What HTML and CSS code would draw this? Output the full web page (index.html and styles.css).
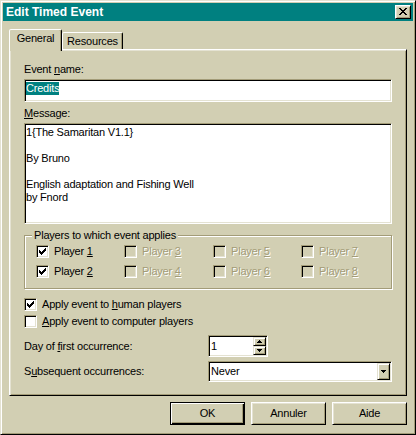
FILE: index.html
```html
<!DOCTYPE html>
<html>
<head>
<meta charset="utf-8">
<title>Edit Timed Event</title>
<link rel="stylesheet" href="styles.css">
</head>
<body>
<div class="window">
  <div class="titlebar">
    <span class="title">Edit Timed Event</span>
    <div class="close raised">
      <svg class="px" width="8" height="7" viewBox="0 0 8 7"><path d="M0 0h2v1H0zM6 0h2v1H6zM1 1h2v1H1zM5 1h2v1H5zM2 2h4v1H2zM3 3h2v1H3zM2 4h4v1H2zM1 5h2v1H1zM5 5h2v1H5zM0 6h2v1H0zM6 6h2v1H6z"/></svg>
    </div>
  </div>

  <div class="tabs">
    <div class="tab active">General</div>
    <div class="tab tab-res">Resources</div>
  </div>

  <div class="panel">
    <div class="label">Event <u>n</u>ame:</div>
    <div class="field input"><span class="sel">Credits</span></div>

    <div class="label label-msg"><u>M</u>essage:</div>
    <div class="field memo">1{The Samaritan V1.1}

By Bruno

English adaptation and Fishing Well
by Fnord</div>

    <fieldset class="group">
      <legend class="legend">Players to which event applies</legend>
      <div class="players">
        <div class="check">
          <span class="box"><svg class="px" width="7" height="7" viewBox="0 0 7 7"><path d="M6 0h1v1H6zM5 1h2v1H5zM0 2h1v1H0zM4 2h3v1H4zM0 3h2v1H0zM3 3h3v1H3zM0 4h5v1H0zM1 5h3v1H1zM2 6h1v1H2z"/></svg></span>
          <span>Player <u>1</u></span>
        </div>
        <div class="check disabled"><span class="box"></span><span>Player <u>3</u></span></div>
        <div class="check disabled"><span class="box"></span><span>Player <u>5</u></span></div>
        <div class="check disabled"><span class="box"></span><span>Player <u>7</u></span></div>
        <div class="check">
          <span class="box"><svg class="px" width="7" height="7" viewBox="0 0 7 7"><path d="M6 0h1v1H6zM5 1h2v1H5zM0 2h1v1H0zM4 2h3v1H4zM0 3h2v1H0zM3 3h3v1H3zM0 4h5v1H0zM1 5h3v1H1zM2 6h1v1H2z"/></svg></span>
          <span>Player <u>2</u></span>
        </div>
        <div class="check disabled"><span class="box"></span><span>Player <u>4</u></span></div>
        <div class="check disabled"><span class="box"></span><span>Player <u>6</u></span></div>
        <div class="check disabled"><span class="box"></span><span>Player <u>8</u></span></div>
      </div>
    </fieldset>

    <div class="check opt opt-first">
      <span class="box"><svg class="px" width="7" height="7" viewBox="0 0 7 7"><path d="M6 0h1v1H6zM5 1h2v1H5zM0 2h1v1H0zM4 2h3v1H4zM0 3h2v1H0zM3 3h3v1H3zM0 4h5v1H0zM1 5h3v1H1zM2 6h1v1H2z"/></svg></span>
      <span>Apply event to <u>h</u>uman players</span>
    </div>
    <div class="check opt opt-second">
      <span class="box"></span>
      <span><u>A</u>pply event to computer players</span>
    </div>

    <div class="row row-day">
      <div class="row-label">Day of <u>f</u>irst occurrence:</div>
      <div class="field spin">
        <div class="spin-text">1</div>
        <div class="spin-btns">
          <div class="spin-btn raised-light"><svg class="px" width="5" height="3" viewBox="0 0 5 3"><path d="M2 0h1v1H2zM1 1h3v1H1zM0 2h5v1H0z"/></svg></div>
          <div class="spin-btn raised-light"><svg class="px" width="5" height="3" viewBox="0 0 5 3"><path d="M0 0h5v1H0zM1 1h3v1H1zM2 2h1v1H2z"/></svg></div>
        </div>
      </div>
    </div>

    <div class="row row-sub">
      <div class="row-label">S<u>u</u>bsequent occurrences:</div>
      <div class="field combo">
        <div class="combo-text">Never</div>
        <div class="combo-btn raised-light"><svg class="px" width="5" height="3" viewBox="0 0 5 3"><path d="M0 0h5v1H0zM1 1h3v1H1zM2 2h1v1H2z"/></svg></div>
      </div>
    </div>
  </div>

  <div class="buttons">
    <div class="btn default">OK</div>
    <div class="btn raised">Annuler</div>
    <div class="btn raised">Aide</div>
  </div>
</div>
</body>
</html>
```

FILE: styles.css
```css
body {
  margin: 0;
  background: #d2cfb3;
  font-family: "Liberation Sans", Arial, sans-serif;
  font-size: 11px;
  line-height: 13px;
  letter-spacing: -0.2px;
  color: #000;
}

u { text-decoration: underline; text-underline-offset: 1px; }

.px { display: block; shape-rendering: crispEdges; fill: #000; }

.window {
  width: 416px;
  height: 435px;
  box-sizing: border-box;
  background: #d2cfb3;
  border: 1px solid;
  border-color: #e4e2d2 #000 #000 #e4e2d2;
  box-shadow: inset 1px 1px #fff, inset -1px -1px #a39c78;
  padding: 2px;
  display: flex;
  flex-direction: column;
}

.titlebar {
  height: 18px;
  flex: none;
  background: #008080;
  display: flex;
  align-items: center;
  justify-content: space-between;
  padding: 0 2px;
}

.title {
  color: #fff;
  font-weight: bold;
  font-size: 12px;
  letter-spacing: 0;
  line-height: 14px;
  padding-left: 1px;
}

.raised {
  border: 1px solid;
  border-color: #fff #000 #000 #fff;
  box-shadow: inset 1px 1px #e4e2d2, inset -1px -1px #a39c78;
}

.raised-light {
  border: 1px solid;
  border-color: #e4e2d2 #000 #000 #e4e2d2;
  box-shadow: inset 1px 1px #fff, inset -1px -1px #a39c78;
}

.close {
  width: 16px;
  height: 14px;
  box-sizing: border-box;
  background: #d2cfb3;
  padding: 2px 0 0 3px;
}

/* tabs */
.tabs {
  flex: none;
  height: 20px;
  margin: 8px 0 0 6px;
  display: flex;
  align-items: flex-end;
}

.tab {
  box-sizing: border-box;
  height: 17px;
  width: 61px;
  padding-top: 2px;
  text-align: center;
  background: #d2cfb3;
  border: 1px solid;
  border-bottom: 0;
  border-color: #fff #000 transparent #fff;
  border-radius: 2px 2px 0 0;
  box-shadow: inset -1px 0 #a39c78;
}

.tab.active {
  width: 53px;
  height: 22px;
  margin-bottom: -2px;
  z-index: 1;
}

/* panel */
.panel {
  flex: none;
  height: 347px;
  margin: 0 6px;
  box-sizing: border-box;
  border: 1px solid;
  border-color: #fff #000 #000 #fff;
  box-shadow: inset 1px 1px #e4e2d2, inset -1px -1px #a39c78;
  padding: 13px 14px 0 14px;
}

.label { height: 13px; }
.label-msg { margin-top: 5px; }

.field {
  box-sizing: border-box;
  background: #fff;
  border: 1px solid;
  border-color: #a39c78 #fff #fff #a39c78;
  box-shadow: inset 1px 1px #000, inset -1px -1px #e4e2d2;
}

.input {
  height: 23px;
  margin-top: 3px;
  padding: 2px 0 0 1px;
}

.sel {
  display: inline-block;
  background: #008080;
  color: #fff;
  height: 13px;
}

.memo {
  height: 101px;
  margin-top: 3px;
  padding: 2px 0 0 1px;
  white-space: pre;
  overflow: hidden;
}

/* group box */
.group {
  margin: 5px 0 0;
  min-width: 0;
  padding: 3px 0 10px 11px;
  border: 1px solid #a39c78;
  box-shadow: inset 1px 1px #fff, 1px 1px #fff;
}

.legend {
  padding: 0 2px;
  margin-left: -4px;
  height: 13px;
  line-height: 13px;
  background: #d2cfb3;
}

.players {
  display: grid;
  grid-template-columns: 88px 89px 88px 1fr;
  row-gap: 7px;
}

.check {
  display: flex;
  align-items: center;
  height: 13px;
  white-space: nowrap;
}

.box {
  flex: none;
  width: 13px;
  height: 13px;
  box-sizing: border-box;
  margin-right: 5px;
  background: #fff;
  border: 1px solid;
  border-color: #a39c78 #fff #fff #a39c78;
  box-shadow: inset 1px 1px #000, inset -1px -1px #e4e2d2;
  padding: 2px 0 0 2px;
}

.check.disabled { color: #a39c78; text-shadow: 1px 1px #fff; }
.check.disabled .box { background: #d2cfb3; }

.opt-first { margin-top: 9px; }
.opt-second { margin-top: 4px; }

/* rows with controls */
.row {
  display: grid;
  grid-template-columns: 184px 184px;
  align-items: center;
}
.row-day { margin-top: 7px; }
.row-sub { margin-top: 4px; }
.row-label { padding-left: 0; }

.spin {
  width: 60px;
  height: 22px;
  padding: 1px;
  display: flex;
}

.spin-text {
  flex: 1;
  padding-left: 1px;
  display: flex;
  align-items: center;
}

.spin-btns {
  width: 13px;
  display: flex;
  flex-direction: column;
}

.spin-btn {
  box-sizing: border-box;
  height: 9px;
  background: #d2cfb3;
  display: flex;
  align-items: center;
  justify-content: center;
}

.combo {
  height: 21px;
  padding: 1px;
  display: flex;
}

.combo-text {
  flex: 1;
  padding-left: 1px;
  display: flex;
  align-items: center;
}

.combo-btn {
  box-sizing: border-box;
  width: 13px;
  background: #d2cfb3;
  display: flex;
  align-items: center;
  justify-content: center;
}

/* bottom buttons */
.buttons {
  flex: none;
  display: flex;
  justify-content: flex-end;
  gap: 6px;
  margin: 6px 6px 0 0;
}

.btn {
  box-sizing: border-box;
  width: 75px;
  height: 23px;
  display: flex;
  align-items: center;
  justify-content: center;
  background: #d2cfb3;
}

.btn.default {
  border: 1px solid #000;
  box-shadow: inset 1px 1px #fff, inset -1px -1px #000, inset -2px -2px #a39c78;
}
```
